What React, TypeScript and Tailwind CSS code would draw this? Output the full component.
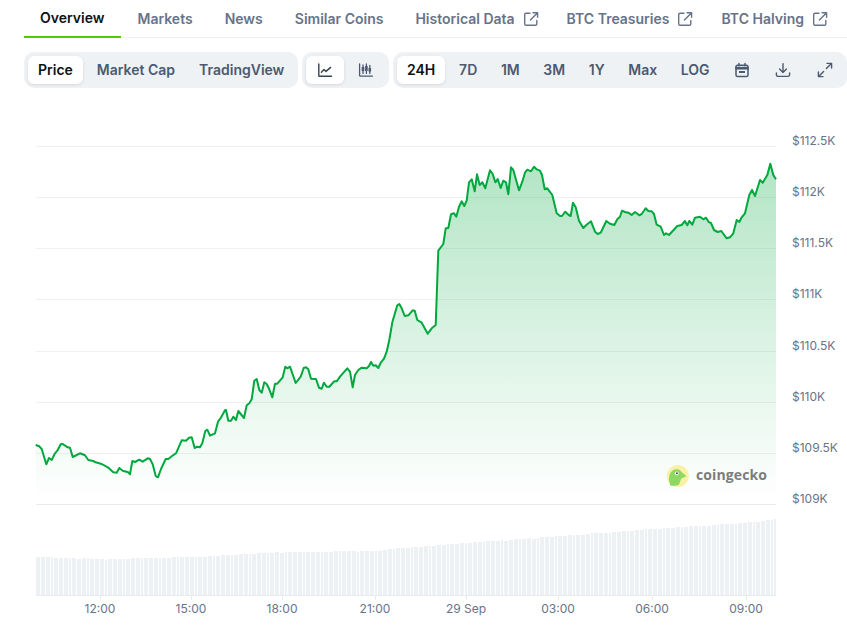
import type { ReactNode } from "react";

// Traced from the reference, in page pixels once mapped through the offsets below
const partA = [[107,495],[118,499],[125,507],[139,553],[147,534],[155,540],[165,520],[172,512],[182,493],[188,492],[203,502],[210,503],[218,531],[240,520],[255,526],[265,540],[280,543],[287,547],[305,552],[325,563],[340,577],[350,578],[358,564],[368,572],[385,577],[390,583],[397,543],[405,546],[418,539],[428,545],[443,535],[450,537],[458,553],[467,588],[474,592],[483,567],[497,537],[505,537],[515,529],[528,520],[545,481],[558,482],[567,473],[575,472],[584,504],[592,500],[600,502],[607,490],[616,453],[622,449],[630,467],[645,460],[654,425],[662,414],[675,391],[678,390],[685,422],[693,422],[700,410],[708,420],[715,393],[732,414],[740,376],[748,370],[755,358],[763,302],[770,297],[778,330],[785,338],[793,307],[800,312],[808,328],[817,352],[825,311],[832,311],[848,292],[856,260],[862,265],[870,260],[887,309],[902,290],[911,264],[918,262],[925,268],[933,296],[948,297],[957,323],[965,326],[972,308],[980,320],[988,320],[1003,304],[1010,304],[1020,290],[1042,265],[1050,275],[1058,322],[1065,285],[1075,270],[1085,263],[1100,265],[1107,258],[1113,246],[1120,257],[1127,256],[1135,264],[1143,247],[1152,236],[1160,215],[1168,180],[1177,127],[1192,76],[1198,72],[1205,85],[1214,108],[1225,106],[1238,91],[1244,92],[1252,120],[1265,128],[1283,161],[1295,145],[1307,135]];
const partB = [[167,525],[175,302],[190,282],[197,235],[205,234],[213,193],[222,190],[229,200],[237,170],[245,154],[253,168],[260,152],[267,97],[275,88],[284,124],[291,73],[299,105],[307,97],[316,115],[330,61],[338,72],[346,97],[353,87],[362,114],[370,92],[378,97],[385,133],[393,52],[400,60],[417,121],[427,95],[435,68],[442,59],[453,64],[462,50],[470,58],[480,62],[486,75],[494,118],[502,115],[517,135],[530,190],[540,198],[546,198],[556,185],[566,195],[572,198],[579,158],[587,172],[597,212]];
const partC = [[490,264],[498,256],[513,244],[525,275],[533,282],[542,278],[559,243],[570,251],[583,255],[592,238],[600,230],[606,212],[615,216],[625,218],[635,225],[645,216],[658,226],[665,222],[677,205],[685,213],[695,214],[702,222],[710,254],[722,260],[732,285],[738,280],[747,285],[772,258],[785,255],[795,243],[802,256],[808,243],[817,254],[825,233],[840,230],[850,238],[858,233],[866,246],[873,249],[882,270],[893,276],[904,273],[920,295],[930,292],[940,280],[950,240],[958,246],[965,232],[975,220],[988,165],[996,150],[1005,168],[1020,120],[1028,128],[1042,105],[1051,71],[1060,105],[1068,118]];

const price = [
  ...partA.map(([x, y]) => [x / 3, 280 + y / 3]),
  ...partB.map(([x, y]) => [380 + x / 3, 150 + y / 3]),
  ...partC.map(([x, y]) => [420 + x / 3, 140 + y / 3]),
];
const linePath = "M" + price.map(([x, y]) => `${x.toFixed(1)} ${y.toFixed(1)}`).join("L");
const areaPath = `${linePath}L776 504L35.7 504Z`;

// top edge of the volume bars at a few x positions
const volTop = [[36,557],[105,559],[190,557],[281,552],[375,551],[400,548],[466,543],[558,536],[650,529],[740,523],[776,519]];
function volAt(x: number) {
  for (let i = 1; i < volTop.length; i++) {
    const [x0, y0] = volTop[i - 1];
    const [x1, y1] = volTop[i];
    if (x <= x1) return Math.round(y0 + ((x - x0) / (x1 - x0)) * (y1 - y0) + (x % 7 === 0 ? 0.6 : 0));
  }
  return 519;
}
const bars: { x: number; w: number; y: number }[] = [];
for (let x = 36, i = 0; x < 776; i++) {
  const w = Math.min(i % 4 === 3 ? 2 : 4, 776 - x);
  bars.push({ x, w, y: volAt(x) });
  x += w + 1;
}

const grid = [146, 197, 248, 299, 351, 402, 453];
const yLabels = [["$112.5K", 146], ["$112K", 197], ["$111.5K", 248], ["$111K", 299], ["$110.5K", 351], ["$110K", 402], ["$109.5K", 453], ["$109K", 504]] as const;
const xLabels = [["12:00", 100], ["15:00", 191], ["18:00", 282], ["21:00", 375], ["29 Sep", 466], ["03:00", 558], ["06:00", 652], ["09:00", 746]] as const;

function ExternalIcon() {
  return (
    <svg viewBox="0 0 16 16" className="w-4 h-4 ml-2 mr-[-4px]" fill="none" stroke="currentColor" strokeWidth="1.4" strokeLinecap="round" strokeLinejoin="round">
      <path d="M7 2.2H3a1.3 1.3 0 0 0-1.3 1.3V13A1.3 1.3 0 0 0 3 14.3h9.5a1.3 1.3 0 0 0 1.3-1.3V9.5" />
      <path d="M10 1.7h4.6v4.6M14.4 1.9 7.4 8.9" />
    </svg>
  );
}

function Tab({ label, active, ext }: { label: string; active?: boolean; ext?: boolean }) {
  return (
    <div className={`h-[38px] pl-4 flex items-center text-sm font-semibold whitespace-nowrap ${active ? "pr-[17px] border-b-2 border-[#4bcc00] text-[#0d1217]" : "pr-4 text-[#677389]"}`}>
      {label}
      {ext && <ExternalIcon />}
    </div>
  );
}

function Seg({ children, active, className = "" }: { children: ReactNode; active?: boolean; className?: string }) {
  return (
    <div className={`h-7 px-[10px] flex items-center justify-center rounded-md text-sm font-semibold whitespace-nowrap ${active ? "bg-white text-[#0d1217] shadow-[0_1px_3px_rgba(15,23,42,0.12)]" : "text-[#4b5a70]"} ${className}`}>
      {children}
    </div>
  );
}

function Group({ children, className = "" }: { children: ReactNode; className?: string }) {
  return <div className={`h-9 p-1 flex gap-1 rounded-[10px] bg-[#eff2f5] ${className}`}>{children}</div>;
}

function Logo() {
  return (
    <g>
      <circle cx="677.8" cy="476" r="11" fill="#f8f1a6" />
      <path d="M670 484.4c-1.2-3.5-1.2-7-.3-9.6 1-3.5 3.8-5.6 7-5.6 2.4 0 3.8 1.3 5 3l4.3 3.6-.6 1.3-3.6.8c-1 1.6-1.8 3.8-2.6 6.2-.5 1-1.5 1.4-2.5 1.5-2.6.3-5 0-6.7-.2Z" fill="#8cd860" />
      <circle cx="676.7" cy="473.3" r="1.9" fill="#fff" />
      <circle cx="676.9" cy="473.3" r="1" fill="#3d4a3a" />
      <text x="696" y="480" fontFamily="'Open Sans', sans-serif" fontWeight="700" fontSize="14" fill="#7c7c7c" textLength="71">coingecko</text>
    </g>
  );
}

export default function App() {
  return (
    <div className="w-[847px] h-[626px] overflow-hidden bg-white pl-6 font-['Inter',sans-serif]">
      <div className="h-[38px] flex items-start border-b border-[#eff2f5]">
        <Tab label="Overview" active />
        <Tab label="Markets" />
        <Tab label="News" />
        <Tab label="Similar Coins" />
        <Tab label="Historical Data" ext />
        <Tab label="BTC Treasuries" ext />
        <Tab label="BTC Halving" ext />
      </div>

      <div className="mt-[14px] flex gap-1">
        <Group>
          <Seg active>Price</Seg>
          <Seg>Market Cap</Seg>
          <Seg>TradingView</Seg>
        </Group>
        <Group>
          <Seg active className="w-[37.33px] !px-0">
            <svg viewBox="0 0 16 16" className="w-4 h-4 text-[#364152]" fill="none" stroke="currentColor" strokeWidth="1.4" strokeLinecap="round" strokeLinejoin="round">
              <path d="M1.8 2v11.4a.8.8 0 0 0 .8.8h12" />
              <path d="M4.4 10.2 7 7.6l2 1.8 4.6-4" />
            </svg>
          </Seg>
          <Seg className="w-[37.33px] !px-0">
            <svg viewBox="0 0 16 16" className="w-4 h-4" fill="none" stroke="currentColor" strokeWidth="1.3" strokeLinecap="round">
              <path d="M1.6 2v11.4a.8.8 0 0 0 .8.8h12" />
              <path d="M5 2.8v8.6M8.4 2v9.4M11.8 3.4v8" />
              <path d="M5 5h0v4M8.4 4v5M11.8 6v3.6" strokeWidth="2.6" strokeLinecap="butt" />
            </svg>
          </Seg>
        </Group>
        <Group className="flex-1">
          <Seg active>24H</Seg>
          <Seg className="!px-[9.8px]">7D</Seg>
          <Seg className="!px-[9.8px]">1M</Seg>
          <Seg className="!px-[9.8px]">3M</Seg>
          <Seg className="!px-[9.8px]">1Y</Seg>
          <Seg className="!px-[9.8px]">Max</Seg>
          <Seg className="!px-[9.8px]">LOG</Seg>
          <Seg className="w-[37.33px] !px-0">
            <svg viewBox="0 0 16 16" className="w-4 h-4" fill="none" stroke="currentColor" strokeWidth="1.5" strokeLinecap="round">
              <rect x="2" y="3.2" width="12" height="11.3" rx="1.6" />
              <path d="M5 1.4v2.4M11 1.4v2.4" />
              <path d="M2 5.6h12v1.2H2z" fill="currentColor" />
              <path d="M5 10h6" strokeWidth="2" strokeLinecap="butt" />
            </svg>
          </Seg>
          <Seg className="w-[37.33px] !px-0">
            <svg viewBox="0 0 16 16" className="w-4 h-4" fill="none" stroke="currentColor" strokeWidth="1.4" strokeLinecap="round" strokeLinejoin="round">
              <path d="M8 1.6v8.6M4.6 7l3.4 3.4L11.4 7" />
              <path d="M1.4 11v1.7a1.7 1.7 0 0 0 1.7 1.7h9.8a1.7 1.7 0 0 0 1.7-1.7V11" />
            </svg>
          </Seg>
          <Seg className="w-[37.33px] !px-0">
            <svg viewBox="0 0 16 16" className="w-4 h-4" fill="none" stroke="currentColor" strokeWidth="1.4" strokeLinecap="round" strokeLinejoin="round">
              <path d="M10 1.4h4.6V6M14.4 1.6 9.4 6.6" />
              <path d="M6 14.6H1.4V10M1.6 14.4l5-5" />
            </svg>
          </Seg>
        </Group>
      </div>

      <svg viewBox="24 88 823 538" className="block w-[823px] h-[538px]" fontFamily="Inter, sans-serif">
        <defs>
          <linearGradient id="priceFill" gradientUnits="userSpaceOnUse" x1="0" y1="165" x2="0" y2="500">
            <stop offset="0" stopColor="#00a83e" stopOpacity="0.3" />
            <stop offset="1" stopColor="#00a83e" stopOpacity="0" />
          </linearGradient>
        </defs>

        {grid.map((y) => (
          <line key={y} x1="36" x2="776" y1={y + 0.5} y2={y + 0.5} stroke="#f0f1f3" />
        ))}
        <line x1="36" x2="776" y1="504.5" y2="504.5" stroke="#e8ebf0" />

        <path d={areaPath} fill="url(#priceFill)" />
        <path d={linePath} fill="none" stroke="#00a83e" strokeWidth="2" strokeLinejoin="round" />

        <Logo />

        {bars.map((b) => (
          <rect key={b.x} x={b.x} y={b.y} width={b.w} height={595 - b.y} fill="#eef1f4" />
        ))}
        <line x1="36" x2="776" y1="595.5" y2="595.5" stroke="#e8ebf0" />

        {yLabels.map(([t, y]) => (
          <text key={t} x="792" y={y - 1} fontSize="12" fill="#677389">{t}</text>
        ))}
        {xLabels.map(([t, x]) => (
          <g key={t}>
            <line x1={x + 0.5} x2={x + 0.5} y1="595" y2="600" stroke="#e8ebf0" />
            <text x={x} y="612.5" fontSize="12" fill="#677389" textAnchor="middle">{t}</text>
          </g>
        ))}
      </svg>
    </div>
  );
}
